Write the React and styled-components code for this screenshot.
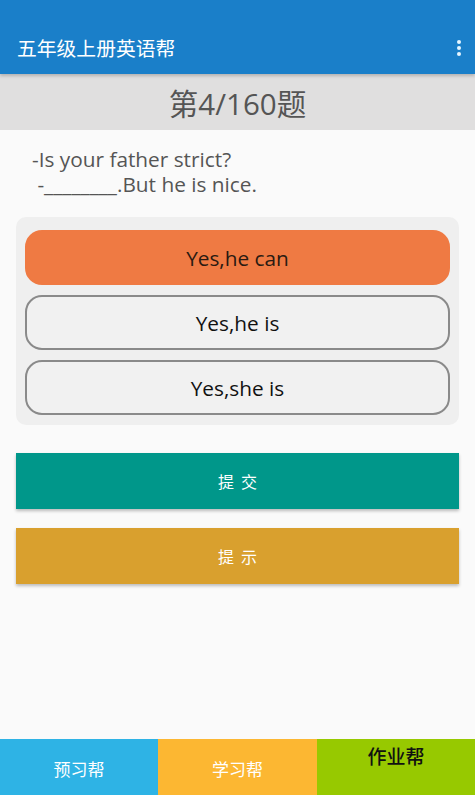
import styled, { createGlobalStyle } from "styled-components";

const GlobalStyle = createGlobalStyle`
  html, body {
    margin: 0;
    padding: 0;
    background: #fafafa;
  }
  body {
    font-family: "Open Sans", "Noto Sans CJK SC", sans-serif;
  }
`;

const Page = styled.div`
  width: 475px;
  height: 795px;
  display: flex;
  flex-direction: column;
  background: #fafafa;
  overflow: hidden;
`;

const AppBar = styled.div`
  height: 74px;
  background: #1a7fc9;
  display: flex;
  align-items: flex-end;
  justify-content: space-between;
  padding: 0 14px 14px 17px;
  box-sizing: border-box;
  box-shadow: 0 2px 3px rgba(0, 0, 0, 0.2);
  position: relative;
  z-index: 1;
`;

const AppTitle = styled.div`
  color: #fff;
  font-size: 19.8px;
  line-height: 24px;
  font-family: "Noto Sans CJK SC", sans-serif;
`;

const MenuDots = styled.div`
  display: flex;
  flex-direction: column;
  gap: 2px;
  padding-bottom: 4px;
  span {
    width: 4px;
    height: 4px;
    border-radius: 50%;
    background: #e6f6ff;
  }
`;

const Counter = styled.div`
  height: 56px;
  background: #e0dfdf;
  color: #555;
  font-size: 29.5px;
  display: flex;
  align-items: center;
  justify-content: center;
  font-family: "Open Sans", "Noto Sans CJK SC", sans-serif;
`;

const Question = styled.div`
  padding: 17px 32px 0;
  color: #555;
  font-size: 20.8px;
  line-height: 25px;
  white-space: pre;
`;

const OptionPanel = styled.div`
  margin: 20px 16px 0;
  padding: 13px 9px 10px;
  background: #efefef;
  border-radius: 10px;
  display: flex;
  flex-direction: column;
  gap: 10px;
`;

const Option = styled.div`
  height: 55px;
  box-sizing: border-box;
  border-radius: 17px;
  display: flex;
  align-items: center;
  justify-content: center;
  font-size: 20.8px;
  background: ${(p) => (p.$active ? "#ef7a43" : "#f1f1f1")};
  border: 2px solid ${(p) => (p.$active ? "#ef7a43" : "#8a8a8a")};
  color: ${(p) => (p.$active ? "#2a1a12" : "#111")};
`;

const Actions = styled.div`
  margin: 28px 16px 0;
  display: flex;
  flex-direction: column;
  gap: 19px;
`;

const ActionButton = styled.div`
  height: 56px;
  background: ${(p) => p.$bg};
  color: #fff;
  font-size: 16px;
  letter-spacing: 7px;
  padding-left: 7px;
  display: flex;
  align-items: center;
  justify-content: center;
  box-shadow: 0 2px 3px rgba(0, 0, 0, 0.25);
  font-family: "Noto Sans CJK SC", sans-serif;
`;

const Spacer = styled.div`
  flex: 1;
`;

const NavBar = styled.div`
  height: 56px;
  display: grid;
  grid-template-columns: 158px 159px 158px;
`;

const NavItem = styled.div`
  background: ${(p) => p.$bg};
  color: ${(p) => (p.$current ? "#111" : "#fff")};
  font-size: ${(p) => (p.$current ? "19px" : "17px")};
  font-weight: ${(p) => (p.$current ? 500 : 400)};
  display: flex;
  justify-content: center;
  align-items: flex-start;
  padding-top: ${(p) => (p.$current ? "3px" : "17px")};
  box-sizing: border-box;
  font-family: "Noto Sans CJK SC", sans-serif;
`;

const options = ["Yes,he can", "Yes,he is", "Yes,she is"];

export default function App() {
  return (
    <>
      <GlobalStyle />
      <Page>
        <AppBar>
          <AppTitle>五年级上册英语帮</AppTitle>
          <MenuDots>
            <span />
            <span />
            <span />
          </MenuDots>
        </AppBar>
        <Counter>第4/160题</Counter>
        <Question>{"-Is your father strict?\n -________.But he is nice."}</Question>
        <OptionPanel>
          {options.map((o, i) => (
            <Option key={o} $active={i === 0}>
              {o}
            </Option>
          ))}
        </OptionPanel>
        <Actions>
          <ActionButton $bg="#00978a">提交</ActionButton>
          <ActionButton $bg="#d9a02e">提示</ActionButton>
        </Actions>
        <Spacer />
        <NavBar>
          <NavItem $bg="#2eb3e5">预习帮</NavItem>
          <NavItem $bg="#fcb732">学习帮</NavItem>
          <NavItem $bg="#97c900" $current>
            作业帮
          </NavItem>
        </NavBar>
      </Page>
    </>
  );
}
